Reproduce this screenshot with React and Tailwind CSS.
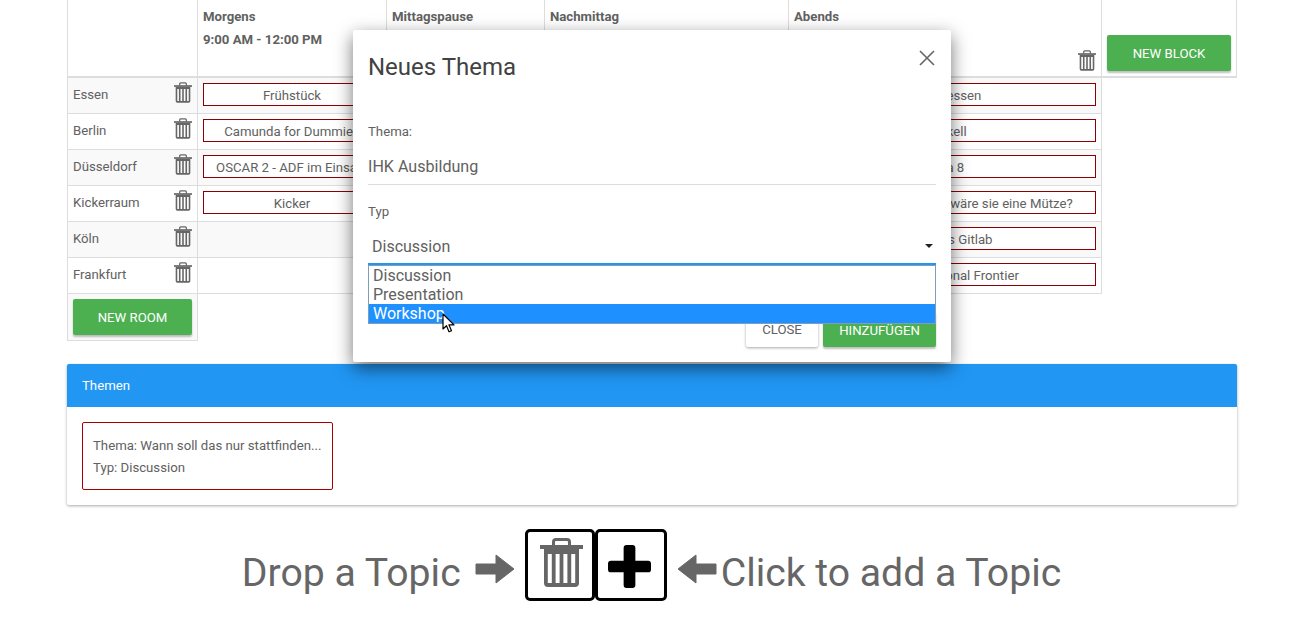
import React from 'react';

function TrashIcon({ className }) {
  return (
    <svg viewBox="0 0 43 49" className={className} fill="currentColor">
      <path d="M0 7h43v4H0z" />
      <path d="M13.500 8V4c0-1.400 1.100-2.500 2.500-2.500h11c1.400 0 2.500 1.100 2.500 2.500v4" fill="none" stroke="currentColor" strokeWidth="3" />
      <path
        fillRule="evenodd"
        d="M4 11h35v34a4 4 0 0 1-4 4H8a4 4 0 0 1-4-4zM7.800 16v29h4V16zM15.600 16v29h4V16zM23.400 16v29h4V16zM31.200 16v29h4V16z"
      />
    </svg>
  );
}

function TopicBox({ children }) {
  return (
    <div className="h-[23px] pt-[2px] border border-[#8b0000] bg-white flex items-center justify-center text-[13.2px] text-[#616161] whitespace-nowrap overflow-hidden">
      {children}
    </div>
  );
}

const rooms = [
  { name: 'Essen', first: 'Frühstück', last: 'Abendessen' },
  { name: 'Berlin', first: 'Camunda for Dummies', last: 'Haskell' },
  { name: 'Düsseldorf', first: 'OSCAR 2 - ADF im Einsatz', last: 'Java 8' },
  { name: 'Kickerraum', first: 'Kicker', last: 'Wenn Git ein Hut wäre wäre sie eine Mütze?' },
  { name: 'Köln', first: null, last: 'Wozu das Gitlab' },
  { name: 'Frankfurt', first: null, last: 'The International Frontier' },
];

function Cell({ children }) {
  return <div className="border-r border-[#ddd] px-[5px] pt-[5px] h-full">{children}</div>;
}

function RoomRow({ room, striped }) {
  return (
    <div className={`grid grid-cols-[131px_189px_158px_244px_313px] w-[1035px] h-[36px] border-b border-[#ddd] ${striped ? 'bg-[#f9f9f9]' : 'bg-white'}`}>
      <div className="border-l border-r border-[#ddd] pl-[5px] pr-[5px] flex items-center justify-between text-[13.2px] text-[#616161] -mt-px">
        <span>{room.name}</span>
        <TrashIcon className="w-[18px] h-[21px] -mt-[5px] text-[#666]" />
      </div>
      <Cell>{room.first && <TopicBox>{room.first}</TopicBox>}</Cell>
      <Cell />
      <Cell />
      <Cell>{room.last && <TopicBox>{room.last}</TopicBox>}</Cell>
    </div>
  );
}

function HeadCell({ title, time, children }) {
  return (
    <div className="relative border-r border-[#ddd] pl-[5px] pt-[9px] text-[13.2px] font-bold text-[#616161]">
      <div className="leading-[16px]">{title}</div>
      {time && <div className="leading-[16px] mt-[7px]">{time}</div>}
      {children}
    </div>
  );
}

function GreenButton({ children, className }) {
  return (
    <button className={`h-[36px] pt-px rounded-[2px] bg-[#4caf50] text-white text-[13.2px] shadow-[0_2px_2px_rgba(0,0,0,0.25)] ${className}`}>
      {children}
    </button>
  );
}

function Dialog() {
  return (
    <div className="absolute left-[353px] top-[30px] w-[598px] h-[332px] bg-white rounded-[2px] shadow-[0_6px_18px_rgba(0,0,0,0.55)] px-[15px] text-[#616161]">
      <div className="flex items-center justify-between pt-[21px]">
        <h2 className="text-[24px] leading-[32px] text-[#424242]">Neues Thema</h2>
        <svg viewBox="0 0 16 16" className="w-[16px] h-[16px] text-[#666] mr-[1px] -mt-[18px]" fill="none" stroke="currentColor" strokeWidth="1.600">
          <path d="M1 1l14 14M15 1L1 15" />
        </svg>
      </div>
      <label className="block mt-[39px] text-[13.2px] leading-[20px]">Thema:</label>
      <div className="mt-[14px] pb-[6px] border-b border-[#ddd] text-[16.1px] leading-[22px]">IHK Ausbildung</div>
      <label className="block mt-[17px] text-[13.2px] leading-[20px]">Typ</label>
      <div className="relative mt-[15px] h-[28px] pl-[4px] flex items-start justify-between border-b-2 border-[#2196f3] text-[16px] leading-[20px]">
        <span>Discussion</span>
        <span className="mt-[7px] mr-[3px] w-0 h-0 border-x-[4px] border-x-transparent border-t-[4px] border-t-[#222]"></span>
        {/* open option list */}
        <div className="absolute left-0 right-0 top-[28px] z-10 border border-[#7f9db9] bg-white text-[16px] leading-[19px]">
          <div className="pl-[4px] h-[19px]">Discussion</div>
          <div className="pl-[4px] h-[19px]">Presentation</div>
          <div className="pl-[4px] h-[19px] bg-[#1e90ff] text-white">Workshop</div>
        </div>
        <svg viewBox="0 0 13 20" className="absolute left-[74px] top-[76px] z-20 w-[13px] h-[20px]">
          <path d="M1 1v15l3.500-3.300 2.500 6 2.500-1-2.500-5.800h5z" fill="#fff" stroke="#000" strokeWidth="1.200" strokeLinejoin="round" />
        </svg>
      </div>
      <div className="flex justify-end gap-[5px] mt-[46px]">
        <button className="w-[72px] h-[36px] pt-[2px] rounded-[2px] bg-white text-[#616161] text-[13.2px] shadow-[0_1px_3px_rgba(0,0,0,0.35)]">CLOSE</button>
        <GreenButton className="w-[113px]"><span className="relative top-px">HINZUFÜGEN</span></GreenButton>
      </div>
    </div>
  );
}

export default function App() {
  return (
    <div className="relative h-[626px] overflow-hidden bg-white font-['Roboto',sans-serif]">
      <div className="px-[67px]">
        {/* Schedule table */}
        <div className="grid grid-cols-[131px_189px_158px_244px_313px_135px] w-[1170px] h-[78px] border-b-2 border-[#ddd]">
          <div className="border-l border-r border-[#ddd]"></div>
          <HeadCell title="Morgens" time="9:00 AM - 12:00 PM" />
          <HeadCell title="Mittagspause" />
          <HeadCell title="Nachmittag" />
          <HeadCell title="Abends">
            <TrashIcon className="absolute right-[5px] top-[50px] w-[18px] h-[21px] text-[#666]" />
          </HeadCell>
          <div className="border-r border-[#ddd] px-[5px] pt-[35px]">
            <GreenButton className="w-[124px]">NEW BLOCK</GreenButton>
          </div>
        </div>
        {rooms.map((room, i) => (
          <RoomRow key={room.name} room={room} striped={i % 2 === 0} />
        ))}
        <div className="w-[131px] h-[47px] border-l border-r border-b border-[#ddd] bg-[#f9f9f9] px-[5px] pt-[5px]">
          <GreenButton className="w-[119px]">NEW ROOM</GreenButton>
        </div>

        {/* Themen panel */}
        <div className="mt-[23px] w-[1170px] h-[141px] rounded-[2px] bg-white shadow-[0_1px_3px_rgba(0,0,0,0.35)]">
          <div className="h-[43px] rounded-t-[2px] bg-[#2196f3] pl-[15px] flex items-center text-[13.2px] text-white">Themen</div>
          <div className="pl-[15px] pt-[15px]">
            <div className="w-[251px] h-[68px] border border-[#a80000] rounded-[2px] pl-[10px] pt-[12px] text-[13.2px] leading-[22px] text-[#616161]">
              <div>Thema: Wann soll das nur stattfinden...</div>
              <div>Typ: Discussion</div>
            </div>
          </div>
        </div>

        {/* Drop zone and add button */}
        <div className="mt-[24px] h-[72px] flex items-center justify-center text-[#666] text-[39.2px] leading-[72px] translate-x-[1px]">
          <span className="mt-[16px]">Drop a Topic</span>
          <svg viewBox="0 0 40 30" className="ml-[14px] mt-[8px] w-[40px] h-[30px]" fill="currentColor">
            <path d="M1 10h20V1l18 14-18 14v-9H1z" stroke="currentColor" strokeLinejoin="round" />
          </svg>
          <div className="ml-[10px] w-[70px] h-[72px] border-[3px] border-black rounded-[5px] pl-[12px] pt-[6px]">
            <TrashIcon className="w-[43px] h-[49px] text-[#666]" />
          </div>
          <div className="w-[72px] h-[72px] border-[3px] border-black rounded-[5px] pl-[10px] pt-[13px]">
            <svg viewBox="0 0 44 44" className="w-[43px] h-[43px]" fill="#000">
              <path d="M16 3a3 3 0 0 1 3-3h6a3 3 0 0 1 3 3v13h13a3 3 0 0 1 3 3v6a3 3 0 0 1-3 3H28v13a3 3 0 0 1-3 3h-6a3 3 0 0 1-3-3V28H3a3 3 0 0 1-3-3v-6a3 3 0 0 1 3-3h13z" />
            </svg>
          </div>
          <svg viewBox="0 0 40 30" className="ml-[10px] mt-[8px] w-[40px] h-[30px]" fill="currentColor">
            <path d="M39 10H19V1L1 15l18 14v-9h20z" stroke="currentColor" strokeLinejoin="round" />
          </svg>
          <span className="ml-[4px] mt-[16px]">Click to add a Topic</span>
        </div>
      </div>
      <Dialog />
    </div>
  );
}
